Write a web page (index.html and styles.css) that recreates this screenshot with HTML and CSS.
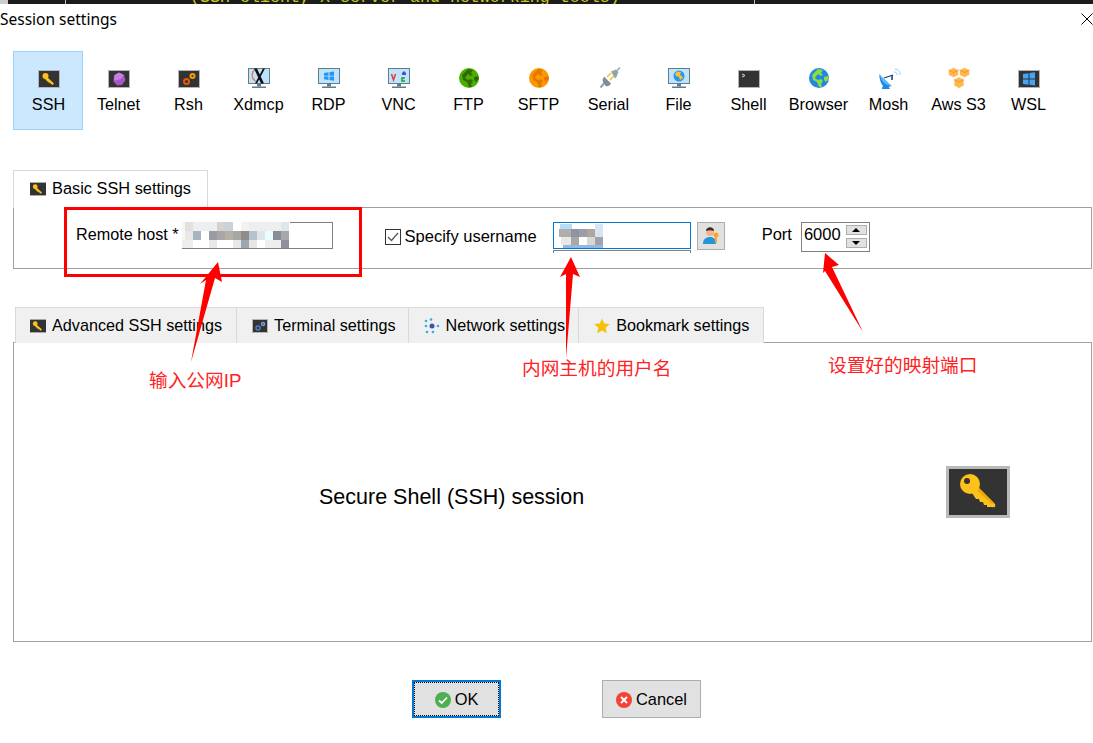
FILE: index.html
```html
<!DOCTYPE html>
<html lang="en">
<head>
    <meta charset="UTF-8">
    <title>Session settings</title>
    <link rel="stylesheet" href="styles.css">
</head>
<body>
    <!-- icon parts used more than once -->
    <svg class="defs" width="0" height="0">
        <defs>
            <symbol id="key-tile" viewBox="0 0 24 24">
                <rect x="1.5" y="4.5" width="21" height="17" fill="#333" stroke="#b5b5b5"/>
                <circle cx="8.5" cy="10" r="3" fill="#fcc21b"/>
                <path d="M9 10l8 7.5-1.5 1.5-1-.5-.5-1-1 0-.5-1-1 0-4-4z" fill="#fcc21b"/>
            </symbol>
            <symbol id="monitor" viewBox="0 0 24 24">
                <rect x="1.5" y="2.5" width="21" height="15" fill="#bfe3fa" stroke="#607d8b"/>
                <rect x="10" y="18" width="4" height="2.500" fill="#607d8b"/>
                <rect x="5" y="20.500" width="14" height="1.500" fill="#607d8b"/>
            </symbol>
            <symbol id="land" viewBox="0 0 24 24">
                <path d="M11 3l5 1-2 3 2 2-3 1-1-2-2 1-2 3 3 2 3-1 2 2-2 3 1 3-3 0-2-5-4-2-1-5 3-3z"/>
                <path d="M17 11l4-1 1 3-3 3-2-2z"/>
            </symbol>
        </defs>
    </svg>

    <div class="term-strip">
        <span class="term-mark"></span>
        <span class="term-tick"></span>
        <span class="term-text">(SSH client, X server and networking tools)</span>
        <span class="term-tick term-tick-2"></span>
    </div>

    <header class="title-row">
        <span class="title">Session settings</span>
        <svg class="close" width="12" height="12" viewBox="0 0 12 12"><path d="M.5.5l11 11M11.500.5l-11 11" stroke="#000" fill="none"/></svg>
    </header>

    <nav class="types">
        <div class="type type-on">
            <svg class="ico" viewBox="0 0 24 24"><use href="#key-tile"/></svg>
            <span>SSH</span>
        </div>
        <div class="type">
            <svg class="ico" viewBox="0 0 24 24">
                <rect x="1.500" y="4.500" width="21" height="17" fill="#333" stroke="#b5b5b5"/>
                <path d="M12 6.500l5 2.500 1.500 5-3.500 5-5 .5-3.500-4 .5-6z" fill="#a855c8"/>
                <path d="M12 6.500l5 2.500-3 4-5 1.500-2-.5.500-5z" fill="#c77fe0"/>
            </svg>
            <span>Telnet</span>
        </div>
        <div class="type">
            <svg class="ico" viewBox="0 0 24 24">
                <rect x="1.500" y="4.500" width="21" height="17" fill="#333" stroke="#b5b5b5"/>
                <circle cx="9.500" cy="15.500" r="2.500" fill="none" stroke="#e8590c" stroke-width="2"/>
                <circle cx="15.500" cy="10" r="2" fill="none" stroke="#f59f00" stroke-width="2"/>
            </svg>
            <span>Rsh</span>
        </div>
        <div class="type">
            <svg class="ico" viewBox="0 0 24 24">
                <use href="#monitor"/>
                <path d="M8 3.500c-4 3-4 9 1 12" fill="none" stroke="#e07a5f" stroke-width="1.300"/>
                <path d="M7 2.500h3l7 15h-3zM16 2.500h2l-8 15H8z" fill="#111"/>
            </svg>
            <span>Xdmcp</span>
        </div>
        <div class="type">
            <svg class="ico" viewBox="0 0 24 24">
                <use href="#monitor"/>
                <path d="M7 7l4.500-.700v3.400H7zM12.500 6.100L17 5.500v4.200h-4.500zM7 10.500h4.500v3.500L7 13.300zM12.500 10.500H17v4.200l-4.500-.600z" fill="#2196f3"/>
            </svg>
            <span>RDP</span>
        </div>
        <div class="type">
            <svg class="ico" viewBox="0 0 24 24">
                <use href="#monitor"/>
                <path d="M4.500 8l2 6 2-6" fill="none" stroke="#e53935" stroke-width="1.500"/>
                <path d="M15 7l2-2 2 2v2h-4z" fill="#3f51d8"/>
                <path d="M18 12h-3v3h3" fill="none" stroke="#1b9e2c" stroke-width="1.500"/>
            </svg>
            <span>VNC</span>
        </div>
        <div class="type">
            <svg class="ico" viewBox="0 0 24 24">
                <circle cx="12" cy="12" r="10" fill="#4caf00"/>
                <use href="#land" class="land-dark"/>
            </svg>
            <span>FTP</span>
        </div>
        <div class="type">
            <svg class="ico" viewBox="0 0 24 24">
                <circle cx="12" cy="12" r="10" fill="#ff9800"/>
                <use href="#land" class="land-gold"/>
            </svg>
            <span>SFTP</span>
        </div>
        <div class="type">
            <svg class="ico" viewBox="0 0 24 24">
                <path d="M14 5.500l5-2 2.500 2.500-2 5-1.500 1.500z" fill="#90a4ae"/>
                <path d="M10 11l4-4M13 14l4-4" stroke="#fbc02d" stroke-width="1.600"/>
                <path d="M7 10.500l7 7-1.500 2-3 1-3-3-1-3.500z" fill="#78909c"/>
                <path d="M7 17.500l-3.500 4" stroke="#90a4ae" stroke-width="2"/>
                <path d="M20 4.500l3-3" stroke="#90a4ae" stroke-width="1.500"/>
            </svg>
            <span>Serial</span>
        </div>
        <div class="type">
            <svg class="ico" viewBox="0 0 24 24">
                <use href="#monitor"/>
                <circle cx="12" cy="10" r="5.500" fill="#2196f3"/>
                <path d="M10 5.500l4 .5-1 3 2 1 1 2-3 2-1-3-3-1-1-2z" fill="#fbc02d"/>
            </svg>
            <span>File</span>
        </div>
        <div class="type">
            <svg class="ico" viewBox="0 0 24 24">
                <rect x="1.500" y="4.500" width="21" height="17" fill="#333" stroke="#b5b5b5"/>
                <path d="M5 8l3 1.500L5 11" fill="none" stroke="#ddd"/>
            </svg>
            <span>Shell</span>
        </div>
        <div class="type">
            <svg class="ico" viewBox="0 0 24 24">
                <circle cx="12" cy="12" r="10" fill="#1e88e5"/>
                <use href="#land" class="land-lime"/>
            </svg>
            <span>Browser</span>
        </div>
        <div class="type">
            <svg class="ico" viewBox="0 0 24 24">
                <path d="M2 8l13 12c-6 1-13-4-13-12z" fill="#64b5f6"/>
                <path d="M3 9c1 7 6 10 11 11-2 1-5 2-7 1-3-3-5-8-4-12z" fill="#1e88e5"/>
                <path d="M5 22l2-4 4 2 2 3H5z" fill="#1e88e5"/>
                <path d="M7 12l9-3" stroke="#0d3c78" stroke-width="1.200"/>
                <path d="M15 9v5" stroke="#0d3c78" stroke-width="1.500"/>
                <path d="M17 6c2 0 3 1 3 3M18 3c3 0 5 2 5 6" fill="none" stroke="#90caf9"/>
            </svg>
            <span>Mosh</span>
        </div>
        <div class="type">
            <svg class="ico" viewBox="0 0 24 24">
                <g fill="#ffb74d" stroke="#fff" stroke-width=".6">
                    <path d="M6.500 1.500l5 2.500v5l-5 2.500-5-2.500v-5z"/>
                    <path d="M17.500 1.500l5 2.500v5l-5 2.500-5-2.500v-5z"/>
                    <path d="M12 11l5 2.500v6L12 22.500 7 19.500v-6z"/>
                </g>
                <path d="M1.500 4l5 2.500L11.500 4M12.500 4l5 2.500L22.500 4M7 13.500l5 2.500 5-2.500" fill="none" stroke="#f57c00" stroke-width=".6"/>
            </svg>
            <span>Aws S3</span>
        </div>
        <div class="type">
            <svg class="ico" viewBox="0 0 24 24">
                <rect x="1.500" y="4.500" width="21" height="17" fill="#333" stroke="#b5b5b5"/>
                <path d="M6 8l5.500-.800V12.500H6zM12.500 7l5.500-.800v6.300h-5.500zM6 13.500h5.500v5.200L6 18zM12.500 13.500H18v6l-5.500-.700z" fill="#42a5f5"/>
            </svg>
            <span>WSL</span>
        </div>
    </nav>

    <div class="tabs tabs-basic">
        <div class="tab tab-on">
            <svg class="tab-ico" viewBox="2 4 20 18" preserveAspectRatio="none"><use href="#key-tile" width="24" height="24"/></svg>
            <span>Basic SSH settings</span>
        </div>
    </div>
    <section class="basic">
        <span class="lbl">Remote host *</span>
        <div class="host">
            <svg class="mosaic" width="108" height="27" viewBox="0 0 108 27">
                <rect width="108" height="27" fill="#fff"/>
                <rect x="0" y="0" width="4" height="27" fill="#f6f6f4"/>
                <rect x="3" y="0" width="8" height="9" fill="#e3e0db"/>
                <rect x="11" y="0" width="24" height="9" fill="#eeeeee"/>
                <rect x="35" y="0" width="8" height="9" fill="#d6d3cd"/>
                <rect x="43" y="0" width="8" height="9" fill="#c9d2d9"/>
                <rect x="59" y="0" width="8" height="9" fill="#f5f1ec"/>
                <rect x="67" y="0" width="32" height="9" fill="#eeeeee"/>
                <rect x="99" y="0" width="8" height="9" fill="#dde6ea"/>
                <rect x="3" y="9" width="8" height="9" fill="#e8e8e8"/>
                <rect x="11" y="9" width="8" height="9" fill="#a9b4c2"/>
                <rect x="27" y="9" width="8" height="9" fill="#9a9ba4"/>
                <rect x="35" y="9" width="8" height="9" fill="#a8a6a8"/>
                <rect x="43" y="9" width="8" height="9" fill="#b5b0a5"/>
                <rect x="51" y="9" width="8" height="9" fill="#a9a6a6"/>
                <rect x="59" y="9" width="8" height="9" fill="#8f8c8c"/>
                <rect x="67" y="9" width="8" height="9" fill="#b6c3cc"/>
                <rect x="75" y="9" width="8" height="9" fill="#dfe6ea"/>
                <rect x="83" y="9" width="8" height="9" fill="#e8ffff"/>
                <rect x="91" y="9" width="8" height="9" fill="#8a8d96"/>
                <rect x="99" y="9" width="8" height="9" fill="#a5a8ad"/>
                <rect x="0" y="18" width="11" height="8" fill="#eeeeee"/>
                <rect x="27" y="18" width="8" height="8" fill="#e8e8e8"/>
                <rect x="51" y="18" width="8" height="8" fill="#e8e8e8"/>
                <rect x="59" y="18" width="8" height="8" fill="#9ea6b0"/>
                <rect x="67" y="18" width="8" height="8" fill="#e6e6e6"/>
                <rect x="83" y="18" width="16" height="8" fill="#eeeeee"/>
                <rect x="99" y="18" width="8" height="8" fill="#8e919c"/>
                <rect x="0" y="26" width="108" height="1" fill="#808080"/>
            </svg>
        </div>
        <label class="check">
            <svg class="box" width="16" height="16" viewBox="0 0 16 16">
                <rect x=".5" y=".5" width="15" height="15" fill="#fff" stroke="#333"/>
                <path d="M3 8l3.500 3.500L13 4" fill="none" stroke="#555" stroke-width="1.200"/>
            </svg>
            <span>Specify username</span>
        </label>
        <div class="user">
            <div class="user-box">
                <svg width="50" height="25" viewBox="0 0 50 25">
                    <rect x="5" y="1" width="12" height="5" fill="#b9dcf6"/>
                    <rect x="40" y="1" width="8" height="5" fill="#d5e7f6"/>
                    <rect x="4" y="6" width="12" height="8" fill="#b0aeaa"/>
                    <rect x="16" y="6" width="8" height="8" fill="#8f959f"/>
                    <rect x="24" y="6" width="8" height="8" fill="#9a9ea8"/>
                    <rect x="32" y="6" width="8" height="8" fill="#b0a59a"/>
                    <rect x="40" y="6" width="8" height="8" fill="#d8e4ef"/>
                    <rect x="6" y="14" width="10" height="8" fill="#e8e8e8"/>
                    <rect x="16" y="14" width="8" height="8" fill="#aaa8a5"/>
                    <rect x="32" y="14" width="8" height="8" fill="#d9d8d3"/>
                    <rect x="40" y="14" width="8" height="8" fill="#a0a3a8"/>
                    <rect x="8" y="22" width="40" height="3" fill="#8ebbe6"/>
                </svg>
            </div>
            <div class="user-foot"></div>
        </div>
        <button class="pick" type="button">
            <svg width="18" height="18" viewBox="0 0 18 18">
                <circle cx="8" cy="5" r="4" fill="#f0b48a"/>
                <path d="M4 4c0-5 8-5 8 0-3-1-5-1-8 0z" fill="#3e2b20"/>
                <path d="M1 17c0-5 3-7 7-7s6 2 6 7z" fill="#2196d8"/>
                <circle cx="14" cy="8" r="2.500" fill="#f9a825"/>
                <path d="M13 9h2v7h-2z" fill="#f9a825"/>
            </svg>
        </button>
        <span class="lbl lbl-port">Port</span>
        <div class="port">
            <span class="port-num">6000</span>
            <div class="spin">
                <div class="spin-btn"><i class="tri-up"></i></div>
                <div class="spin-btn"><i class="tri-down"></i></div>
            </div>
        </div>
    </section>

    <div class="tabs tabs-lower">
        <div class="tab">
            <svg class="tab-ico" viewBox="2 4 20 18" preserveAspectRatio="none"><use href="#key-tile" width="24" height="24"/></svg>
            <span>Advanced SSH settings</span>
        </div>
        <div class="tab">
            <svg class="tab-ico" viewBox="0 0 16 14">
                <rect x=".5" y=".5" width="15" height="13" fill="#333" stroke="#b5b5b5"/>
                <circle cx="6" cy="9" r="2" fill="none" stroke="#4a7fd0" stroke-width="1.500"/>
                <circle cx="11" cy="5" r="1.500" fill="none" stroke="#6fa0e0" stroke-width="1.500"/>
            </svg>
            <span>Terminal settings</span>
        </div>
        <div class="tab">
            <svg class="tab-ico" viewBox="0 0 16 16">
                <circle cx="8" cy="8" r="2.500" fill="#3f51b5"/>
                <g fill="#26b6d4">
                    <circle cx="2" cy="3" r="1.300"/><circle cx="7" cy="1.500" r="1.300"/><circle cx="14" cy="8" r="1.300"/>
                    <circle cx="2" cy="8" r="1.300"/><circle cx="3" cy="14" r="1.300"/><circle cx="9" cy="14" r="1.300"/>
                </g>
            </svg>
            <span>Network settings</span>
        </div>
        <div class="tab">
            <svg class="tab-ico" viewBox="0 0 16 16"><path d="M8 .5l2.300 5 5.400.6-4 3.700 1.100 5.400L8 12.500l-4.800 2.700 1.100-5.400-4-3.700 5.400-.6z" fill="#f5c20b"/></svg>
            <span>Bookmark settings</span>
        </div>
    </div>
    <section class="detail">
        <span class="detail-text">Secure Shell (SSH) session</span>
        <svg class="big-key" width="64" height="52" viewBox="0 0 64 52">
            <rect x="1.500" y="1.500" width="61" height="49" fill="#333" stroke="#b9b9b9" stroke-width="3"/>
            <path d="M24 24l5-6 20 20c1 2 0 4-3 3h-5v-2h-3l-1-3h-3l-1-3h-3z" fill="#fcc21b"/>
            <path d="M30 19l18 18-2 1-18-16z" fill="#f0a800"/>
            <circle cx="24" cy="18" r="10" fill="#fcc21b"/>
            <circle cx="21" cy="15" r="3" fill="#333"/>
        </svg>
    </section>

    <footer class="actions">
        <button class="btn btn-ok" type="button">
            <svg width="16" height="16" viewBox="0 0 16 16">
                <circle cx="8" cy="8" r="8" fill="#4caf50"/>
                <path d="M4 8.500l2.800 2.500L12 5.500" fill="none" stroke="#fff" stroke-width="1.800"/>
            </svg>
            <span>OK</span>
        </button>
        <button class="btn btn-cancel" type="button">
            <svg width="16" height="16" viewBox="0 0 16 16">
                <circle cx="8" cy="8" r="8" fill="#f44336"/>
                <path d="M5 5l6 6M11 5l-6 6" fill="none" stroke="#fff" stroke-width="2"/>
            </svg>
            <span>Cancel</span>
        </button>
    </footer>

    <!-- red notes drawn over the screenshot -->
    <div class="red-box"></div>
    <svg class="arrows" width="1093" height="743" viewBox="0 0 1093 743">
        <path d="M218 262l4 20-7-4-24 84 15-82-6 4z" fill="#f00"/>
        <path d="M571 257l9 20-7-3-7 84 0-84-6 3z" fill="#f00"/>
        <path d="M825 253l14 12-7 2 31 65-38-61-2 2z" fill="#f00"/>
    </svg>
    <span class="note note-ip">输入公网IP</span>
    <span class="note note-user">内网主机的用户名</span>
    <span class="note note-port">设置好的映射端口</span>
</body>
</html>
```

FILE: styles.css
```css
/* page */
html, body {
    margin: 0;
    padding: 0;
    background: #fff;
    color: #000;
    font-family: "Liberation Sans", Arial, sans-serif;
    font-size: 16px;
}
body {
    position: relative;
    width: 1093px;
    height: 743px;
    overflow: hidden;
}
.defs {
    display: block;
    height: 0;
}

/* bit of the terminal behind the dialog */
.term-strip {
    display: flex;
    height: 4px;
    overflow: hidden;
    background: #1c1c1c;
}
.term-mark {
    width: 8px;
    background: #ccc;
}
.term-tick {
    width: 1px;
    margin-left: 57px;
    background: #9ccbee;
}
.term-text {
    margin-left: 124px;
    margin-top: -12px;
    font-family: "Liberation Mono", monospace;
    font-size: 16.670px;
    line-height: 19px;
    white-space: nowrap;
    color: #c8c820;
}
.term-tick-2 {
    margin-left: 134px;
}

/* title */
.title-row {
    display: flex;
    justify-content: space-between;
    align-items: center;
    height: 31px;
}
.title {
    margin-top: -2px;
    font-family: "Noto Sans", sans-serif;
    font-size: 15.500px;
}
.close {
    margin-top: -1px;
}

/* session types */
.types {
    display: flex;
    margin: 16px 0 0 13px;
}
.type {
    display: flex;
    flex-direction: column;
    align-items: center;
    box-sizing: border-box;
    width: 70px;
    height: 79px;
    padding: 15px 0 0 1px;
    font-size: 16.200px;
}
.type-on {
    background: #cce8ff;
    border: 1px solid #99d1ff;
    padding: 14px 0 0 1px;
}
.ico {
    display: block;
    width: 24px;
    height: 24px;
    margin-left: 1px;
}
.type span {
    margin-top: 5px;
    line-height: 18px;
}
.land-dark { fill: #2e6b00; }
.land-gold { fill: #e07b00; }
.land-lime { fill: #8bdc3c; }

/* tabs */
.tabs {
    display: flex;
    position: relative;
    z-index: 1;
    font-size: 16.200px;
}
.tabs-basic {
    margin: 40px 0 0 13px;
}
.tabs-lower {
    margin: 38px 0 0 15px;
}
.tab {
    display: flex;
    align-items: center;
    gap: 6px;
    box-sizing: border-box;
    padding: 0 13px 0 15px;
    height: 36px;
    background: #f0f0f0;
    border: 1px solid #d9d9d9;
    border-bottom: 0;
    margin-left: -1px;
}
.tabs-lower .tab:first-child {
    margin-left: 0;
    padding: 0 14px;
}
.tabs-lower .tab:nth-child(2) {
    padding-right: 12px;
}
.tabs-lower .tab:last-child {
    padding-right: 14px;
}
.tabs .tab-on {
    height: 38px;
    margin: 0 0 -1px;
    padding: 0 16px 2px;
    background: #fff;
}
.tab-on span {
    font-size: 16.350px;
}
.tab-ico {
    display: block;
    width: 16px;
    height: 14px;
}
.tabs-lower .tab:nth-child(3) .tab-ico,
.tabs-lower .tab:nth-child(4) .tab-ico {
    height: 16px;
}

/* basic settings row */
.basic {
    display: flex;
    align-items: flex-start;
    box-sizing: border-box;
    width: 1079px;
    height: 62px;
    margin-left: 13px;
    padding: 14px 0 0 62px;
    border: 1px solid #a0a0a0;
    font-size: 16.500px;
}
.lbl {
    line-height: 24px;
    white-space: nowrap;
}
.lbl:first-child {
    font-size: 16.200px;
}
.host {
    box-sizing: border-box;
    width: 151px;
    height: 27px;
    margin-left: 3px;
    border: 1px solid #808080;
}
.mosaic {
    display: block;
    margin: -1px 0 0 -1px;
}
.check {
    display: flex;
    align-items: center;
    gap: 4px;
    margin: 7px 0 0 52px;
}
.box {
    display: block;
}
.check span {
    margin-top: -2px;
    line-height: 16px;
}
.user {
    width: 138px;
    margin-left: 16px;
}
.user-box {
    box-sizing: border-box;
    height: 27px;
    padding-left: 1px;
    background: #fff;
    border: 1px solid #0078d7;
    overflow: hidden;
}
.user-box svg {
    display: block;
}
.user-foot {
    box-sizing: border-box;
    height: 3px;
    margin-top: 1px;
    border: 1px solid #808080;
    border-bottom: 0;
}
.pick {
    display: flex;
    align-items: center;
    justify-content: center;
    box-sizing: border-box;
    width: 28px;
    height: 28px;
    margin-left: 6px;
    padding: 0;
    background: #e1e1e1;
    border: 1px solid #adadad;
}
.lbl-port {
    margin-left: 37px;
}
.port {
    display: flex;
    justify-content: space-between;
    box-sizing: border-box;
    width: 69px;
    height: 30px;
    margin-left: 9px;
    padding: 2px 2px 0 2px;
    border: 1px solid #808080;
    line-height: 20px;
}
.port-num {
    margin-top: -1px;
}
.spin {
    display: flex;
    flex-direction: column;
    gap: 3px;
}
.spin-btn {
    display: flex;
    align-items: center;
    justify-content: center;
    box-sizing: border-box;
    width: 21px;
    height: 10px;
    background: #e1e1e1;
    border: 1px solid #adadad;
}
.tri-up,
.tri-down {
    width: 0;
    height: 0;
    border-left: 4px solid transparent;
    border-right: 4px solid transparent;
}
.tri-up {
    border-bottom: 4px solid #000;
}
.tri-down {
    border-top: 4px solid #000;
}

/* lower panel */
.detail {
    display: flex;
    align-items: flex-start;
    justify-content: space-between;
    box-sizing: border-box;
    width: 1079px;
    height: 300px;
    margin-left: 13px;
    margin-top: -1px;
    padding: 123px 81px 0 305px;
    border: 1px solid #a0a0a0;
}
.detail-text {
    margin-top: 19px;
    font-size: 21.500px;
    line-height: 24px;
}

/* buttons */
.actions {
    display: flex;
    margin: 38px 0 0 412px;
}
.btn {
    display: flex;
    align-items: center;
    justify-content: center;
    gap: 4px;
    box-sizing: border-box;
    height: 38px;
    padding: 1px 0 0;
    background: #e1e1e1;
    border: 1px solid #adadad;
    font: inherit;
    font-size: 16.400px;
}
.btn-ok {
    width: 89px;
    border: 2px solid #0078d7;
    outline: 1px dotted #000;
    outline-offset: -3px;
}
.btn-cancel {
    width: 99px;
    margin-left: 101px;
}

/* red notes */
.red-box {
    position: absolute;
    z-index: 2;
    left: 64px;
    top: 207px;
    width: 292px;
    height: 64px;
    border: 3px solid #f00;
}
.arrows {
    position: absolute;
    z-index: 2;
    left: 0;
    top: 0;
    pointer-events: none;
}
.note {
    position: absolute;
    z-index: 2;
    font-family: "Liberation Sans", "Noto Sans CJK SC", sans-serif;
    font-size: 18.700px;
    line-height: 24px;
    color: #f22;
    white-space: nowrap;
}
.note-ip {
    left: 149px;
    top: 369px;
}
.note-user {
    left: 522px;
    top: 357px;
}
.note-port {
    left: 828px;
    top: 354px;
}
```
